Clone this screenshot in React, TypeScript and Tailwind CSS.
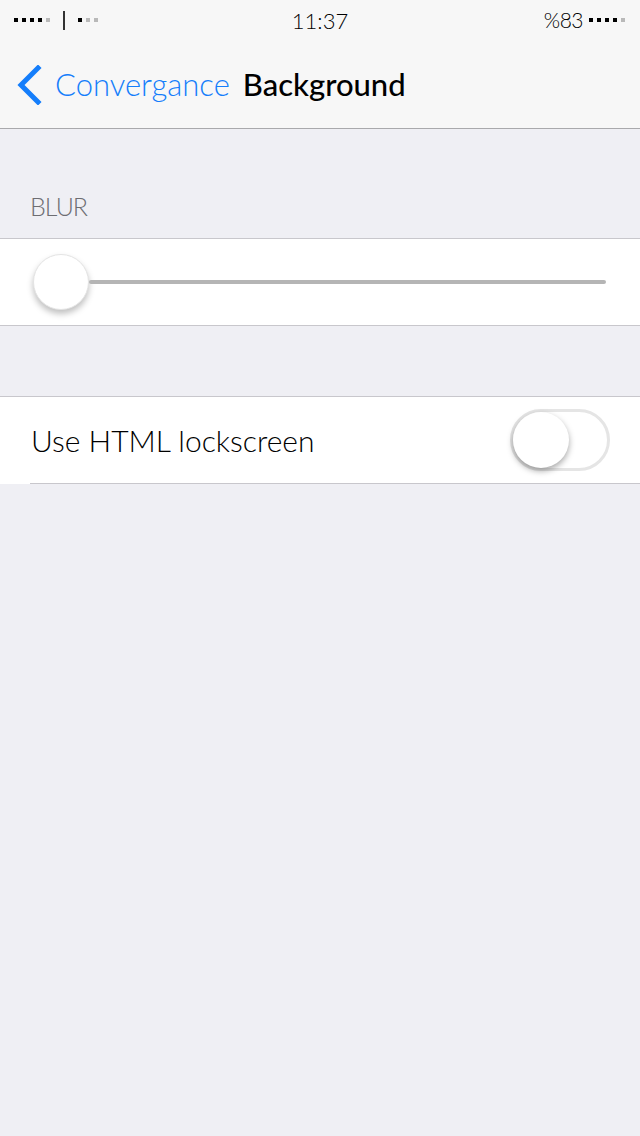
import { useState } from 'react';

const Dots = ({ on, total }: { on: number; total: number }) => (
	<div className="flex gap-[4px]">
		{Array.from({ length: total }).map((_, i) => (
			<span key={i} className={`w-[4px] h-[4px] ${i < on ? 'bg-black' : 'bg-[#b9b9b9]'}`} />
		))}
	</div>
);

const App = () => {
	const [html, setHtml] = useState(false);

	return (
		<div className="w-[640px] h-[1136px] bg-[#efeff4] overflow-hidden" style={{ fontFamily: 'Lato, "Open Sans", sans-serif' }}>
			{/* status + nav */}
			<div className="bg-[#f7f7f7] border-b border-[#a9a9ac]">
				<div className="h-10 relative flex items-center justify-between px-[14px]">
					<div className="flex items-center">
						<Dots on={4} total={5} />
						<span className="ml-[13px] w-[2px] h-[19px] bg-[#333]" />
						<span className="ml-[13px]">
							<Dots on={1} total={3} />
						</span>
					</div>
					<span className="absolute left-1/2 -translate-x-1/2 text-[22px] text-black font-light">11:37</span>
					<div className="flex items-center gap-[6px] pr-[1px]">
						<span className="text-[21px] text-black font-light tracking-[-0.5px]">%83</span>
						<Dots on={4} total={5} />
					</div>
				</div>
				<div className="h-[88px] flex items-center pl-[16px]">
					<svg width="26" height="40" viewBox="0 0 26 40" className="mt-[1px]">
						<path d="M22 3 L5 20 L22 37" fill="none" stroke="#157efb" strokeWidth="5" strokeLinecap="square" />
					</svg>
					<span className="ml-[13px] text-[31px] text-[#157efb] font-light">Convergance</span>
					<span className="ml-[13px] text-[31px] text-black font-medium">Background</span>
				</div>
			</div>

			{/* blur */}
			<div className="pt-[62px] pb-[17px] pl-[30px] text-[25px] leading-[30px] text-[#6d6d72] uppercase font-light tracking-[-1px]">Blur</div>
			<div className="bg-white border-y border-[#c8c7cc] h-[88px] flex items-center pl-[33px] pr-[34px]">
				<div className="w-14 h-14 rounded-full bg-white border border-[#e4e4e4] shadow-[0_4px_6px_rgba(0,0,0,0.25)] shrink-0" />
				<div className="flex-1 h-1 rounded-full bg-[#b5b5b5]" />
			</div>

			{/* html lockscreen */}
			<div className="mt-[70px] bg-white border-t border-[#c8c7cc]">
				<div className="h-[86px] flex items-center justify-between pl-[31px] pr-[30px]">
					<span className="text-[30px] text-black font-light">Use HTML lockscreen</span>
					<button
						onClick={() => setHtml(!html)}
						className={`w-[100px] h-[62px] rounded-full border-[3px] flex items-center ${html ? 'bg-[#4cd964] border-[#4cd964] justify-end' : 'bg-white border-[#e5e5e5] justify-start'}`}
					>
						<span className="w-14 h-14 rounded-full bg-white shadow-[0_3px_6px_rgba(0,0,0,0.35)]" />
					</button>
				</div>
				<div className="ml-[30px] h-px bg-[#c8c7cc]" />
			</div>
		</div>
	);
};

export default App;
